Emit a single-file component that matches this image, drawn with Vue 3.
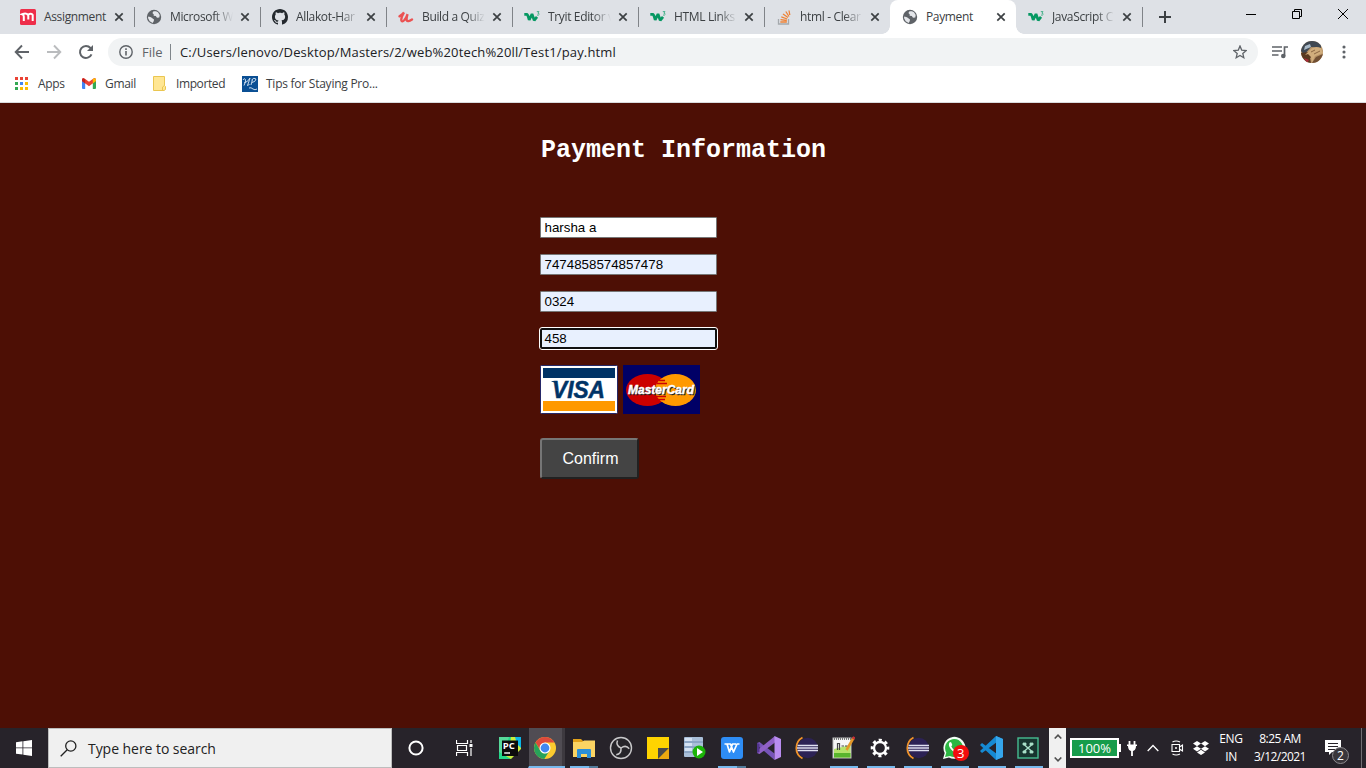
<script setup>
const tabs = [
  { icon: 'mendeley', title: 'Assignment', full: true },
  { icon: 'globe', title: 'Microsoft W' },
  { icon: 'github', title: 'Allakot-Har' },
  { icon: 'udemy', title: 'Build a Quiz' },
  { icon: 'w3', title: 'Tryit Editor v' },
  { icon: 'w3', title: 'HTML Links' },
  { icon: 'stack', title: 'html - Clear' },
  { icon: 'globe', title: 'Payment', active: true, full: true },
  { icon: 'w3', title: 'JavaScript C' }
]

const apps = [
  { icon: 'pycharm' },
  { icon: 'chrome', current: true },
  { icon: 'explorer', open: true, stacked: true },
  { icon: 'obs' },
  { icon: 'sticky' },
  { icon: 'server' },
  { icon: 'wps', open: true, stacked: true },
  { icon: 'vs' },
  { icon: 'eclipse' },
  { icon: 'npp', open: true },
  { icon: 'gear', open: true },
  { icon: 'eclipse', open: true },
  { icon: 'whatsapp', open: true, badge: '3' },
  { icon: 'vscode', open: true },
  { icon: 'xnode', open: true }
]

const fields = [
  { value: 'harsha a' },
  { value: '7474858574857478', filled: true },
  { value: '0324', filled: true },
  { value: '458', filled: true, focus: true }
]
</script>

<template>
  <div class="screen">
    <svg class="defs" width="0" height="0" aria-hidden="true">
      <symbol id="mendeley" viewBox="0 0 16 16">
        <rect width="16" height="16" rx="1.5" fill="#ee2e4a" />
        <path d="M3.800 12V7.500Q3.800 5.600 2.200 5.200Q6.300 3.800 7.900 5.800Q11.500 3.800 12.700 6V12M8.300 10.500V6.500" fill="none" stroke="#fff" stroke-width="2" />
      </symbol>
      <symbol id="globe" viewBox="0 0 16 16">
        <circle cx="8" cy="8" r="7.200" fill="#5f6368" />
        <path d="M2.300 7.500L5 8.200L8 10.600L7.800 12.100L6.700 14L3.700 12.300L2 9Z M7.500 2.300L6.400 4.100L7.800 5.400L7.600 6.800L9.800 7.100L11 8.700L13.300 8.600L13.700 6L12 3.300L10 2.200Z" fill="#e4e6ea" />
      </symbol>
      <symbol id="github" viewBox="0 0 16 16">
        <path fill="#24292e" fill-rule="evenodd" d="M8 0C3.580 0 0 3.580 0 8c0 3.540 2.290 6.530 5.470 7.590.4.070.550-.170.550-.380 0-.190-.010-.820-.010-1.490-2.010.370-2.530-.490-2.690-.940-.090-.230-.480-.940-.820-1.130-.280-.150-.680-.520-.010-.530.630-.010 1.080.580 1.230.820.720 1.210 1.870.870 2.330.660.070-.520.280-.870.510-1.070-1.780-.200-3.640-.890-3.640-3.950 0-.870.310-1.590.820-2.150-.080-.200-.360-1.020.080-2.120 0 0 .670-.210 2.200.820.640-.180 1.320-.270 2-.270s1.360.090 2 .270c1.530-1.040 2.200-.820 2.200-.820.440 1.100.160 1.920.080 2.120.510.560.820 1.270.820 2.150 0 3.070-1.870 3.750-3.650 3.950.290.250.540.730.540 1.480 0 1.070-.010 1.930-.010 2.200 0 .210.150.460.550.380A8 8 0 0 0 16 8c0-4.420-3.580-8-8-8z" />
      </symbol>
      <symbol id="udemy" viewBox="0 0 16 16">
        <path d="M1.500 7.300Q4.500 5.500 6 3.400Q3 8.500 3.300 11.200Q3.800 13.700 6.400 11Q8.400 8.700 9.600 5.200Q8.200 9.500 8.700 11.300Q9.600 13.400 14 10.500" fill="none" stroke="#eb5252" stroke-width="2.300" stroke-linecap="round" />
      </symbol>
      <symbol id="w3" viewBox="0 0 16 16">
        <path d="M.3 5.300H3Q4 6 5.200 11L8 5L10.200 11.300L13 7.800" fill="none" stroke="#059862" stroke-width="2.700" stroke-linejoin="bevel" />
        <path d="M12.800 2.600H15L13.900 4.200Q15.300 4.300 15.100 5.500Q14.600 6.600 13 6" fill="none" stroke="#3aad83" stroke-width=".9" />
      </symbol>
      <symbol id="stack" viewBox="0 0 16 16">
        <path d="M2.500 10V15H12.500V10" fill="none" stroke="#a5a9ad" stroke-width="1.300" />
        <path d="M4.300 13H10.800M4.500 10.600L10.800 11.500M5.300 7.900L11.200 10M7 4.900L12 8.600M9.800 2.500L13 7.500M13 1.500L13.800 6" fill="none" stroke="#ef8236" stroke-width="1.300" />
      </symbol>

      <symbol id="pycharm" viewBox="0 0 24 24">
        <path d="M1 1H16L12 23H1Z" fill="#21d789" /><path d="M1 1H11L4 23H1Z" fill="#57d99a" />
        <path d="M13 1H23V13L13 23H1L11 16Z" fill="#c9ed3c" /><path d="M17 1H23V12L19 8Z" fill="#0bb6e8" />
        <path d="M1 16L13 23H1Z" fill="#21d789" />
        <rect x="4" y="4.500" width="16" height="15.500" fill="#0b0b0b" />
        <text x="4.800" y="13" font-size="9.500" font-weight="700" fill="#fff" letter-spacing="0">PC</text>
        <path d="M6.200 17H12" stroke="#fff" stroke-width="1.400" />
      </symbol>
      <symbol id="chrome" viewBox="0 0 24 24">
        <circle cx="12" cy="12" r="11" fill="#fccb2f" />
        <path d="M2.500 6.500A11 11 0 0 1 21.500 6.500H12L7.500 14.500Z" fill="#dd4a3c" />
        <path d="M2.500 6.500L7.300 14.700Q9 17.500 12 17.500L16.300 15L11.300 23A11 11 0 0 1 2.500 6.500Z" fill="#27a25a" />
        <circle cx="12" cy="12" r="5.500" fill="#fff" /><circle cx="12" cy="12" r="4.400" fill="#4087f0" />
      </symbol>
      <symbol id="explorer" viewBox="0 0 24 24">
        <path d="M1 3H9L11 5H23V21H1Z" fill="#e3a21a" /><path d="M1 6H10L12 4.500H23V21H1Z" fill="#fbd463" />
        <path d="M5 22V14Q5 13 6 13H18Q19 13 19 14V22H15V18H9V22Z" fill="#2b8fd8" />
      </symbol>
      <symbol id="obs" viewBox="0 0 24 24">
        <circle cx="12" cy="12" r="10.500" fill="#26252a" stroke="#c8c8ca" stroke-width="1.400" />
        <g fill="none" stroke="#c8c8ca" stroke-width="1.500">
          <path d="M12 12Q6.500 9.500 8.500 4.500" />
          <path d="M12 12Q6.500 9.500 8.500 4.500" transform="rotate(120 12 12)" />
          <path d="M12 12Q6.500 9.500 8.500 4.500" transform="rotate(240 12 12)" />
        </g>
      </symbol>
      <symbol id="sticky" viewBox="0 0 24 24">
        <path d="M1 1H23V12L12 23H1Z" fill="#ffd400" /><path d="M12 23V12H23Z" fill="#4a4a4a" /><path d="M12 23L23 12V23Z" fill="#eca910" />
      </symbol>
      <symbol id="server" viewBox="0 0 24 24">
        <rect x="1" y="1" width="19" height="20" rx="1" fill="#a9bfd9" />
        <path d="M1 6H20M1 11H20M1 16H20" stroke="#6f8cb0" stroke-width="1" /><path d="M2 2H9V5H2ZM2 7H9V10H2ZM2 12H9V15H2Z" fill="#d3e1f2" />
        <circle cx="16" cy="16" r="6.500" fill="#1bb408" /><path d="M14 12V20L20 16Z" fill="#fff" />
      </symbol>
      <symbol id="wps" viewBox="0 0 24 24">
        <rect x="1" y="1" width="22" height="22" rx="3" fill="#2e8df5" />
        <path d="M4.500 8H10.500L13.500 16L17 8H19.500M7 8L9.500 16L12.500 8H16" fill="none" stroke="#fff" stroke-width="1.700" stroke-linejoin="round" />
      </symbol>
      <symbol id="vs" viewBox="0 0 24 24">
        <path d="M0 7L2.500 6L17.500 17.500V24L0 9Z" fill="#7654b8" />
        <path d="M0 17L2.500 18L18 6.500V0L0 14.500Z" fill="#8f60c6" /><path d="M0 7L2.500 8V16L0 17Z" fill="#52348d" />
        <path d="M17.500 0L24 3V21L17.500 24Z" fill="#b98cf0" />
      </symbol>
      <symbol id="eclipse" viewBox="0 0 24 24">
        <path d="M8.500 1.500A12 12 0 0 0 8.500 22.500" fill="none" stroke="#f0922a" stroke-width="1.800" />
        <circle cx="13.700" cy="12" r="10.200" fill="#2c2255" />
        <path d="M3.500 9.500H24M3 12H24M3.500 14.500H24" stroke="#dfe0f1" stroke-width="1.500" />
      </symbol>
      <symbol id="npp" viewBox="0 0 24 24">
        <rect x="2" y="2" width="18" height="20" fill="#f6f6f6" stroke="#bbb" />
        <path d="M3 13L19.500 9V21.500H3Z" fill="#b3e36a" /><path d="M3 17H19.500V21.500H3Z" fill="#58b52d" />
        <path d="M3 3H20" stroke="#555" stroke-width="1.600" stroke-dasharray="1 1" />
        <path d="M6.500 14V7.500H8.500V14M10.500 10H13M14 10H16.500" fill="none" stroke="#444" stroke-width="1.200" />
        <path d="M22.500 2L15.500 14" stroke="#e39728" stroke-width="2.600" /><path d="M23.300 .800L22 3" stroke="#c72f36" stroke-width="2.600" />
      </symbol>
      <symbol id="gear" viewBox="0 0 24 24">
        <circle cx="12" cy="12" r="6" fill="none" stroke="#fff" stroke-width="2.300" />
        <circle cx="12" cy="12" r="7.800" fill="none" stroke="#fff" stroke-width="3" stroke-dasharray="3.063 3.063" stroke-dashoffset="1.530" />
      </symbol>
      <symbol id="whatsapp" viewBox="0 0 24 24">
        <path d="M1 23L2.700 17A11 11 0 1 1 7 21.400Z" fill="#f2fff5" /><path d="M3 21L4.300 16.500A9 9 0 1 1 8 20Z" fill="#2cb742" />
        <path d="M8 6Q6 8 7.500 11Q10 16 15 17.200Q17.500 16.500 17 14.500L14.500 13L13 14.300Q10.500 13 9.300 10.500L10.300 9L9.300 6.500Z" fill="#fff" />
      </symbol>
      <symbol id="vscode" viewBox="0 0 24 24">
        <path d="M17 0L24 3V21L17 24L1 9L3 7L18 18V6L3 17L1 15Z" fill="#168ad3" /><path d="M17 0L24 3V21L17 24Z" fill="#35a6ec" />
      </symbol>
      <symbol id="xnode" viewBox="0 0 24 24">
        <rect x="2" y="2" width="20" height="20" fill="#17352f" stroke="#46bd91" stroke-width="1.400" />
        <path d="M7.500 8L16.500 16M7.500 16L16.500 8" stroke="#a8e0c8" stroke-width="1.400" />
        <path d="M7 7H10V9H7ZM14 7H17V9H14ZM7 15H10V17H7ZM14 15H17V17H14Z" fill="#a8e0c8" stroke="#a8e0c8" stroke-width=".8" />
      </symbol>
    </svg>

    <header class="tabstrip">
      <div v-for="(t, i) in tabs" :key="i" class="tab" :class="{ active: t.active, nosep: i === 6 }">
        <svg class="favicon"><use :href="'#' + t.icon" /></svg>
        <span class="title" :class="{ fade: !t.full }">{{ t.title }}</span>
        <svg class="close" viewBox="0 0 10 10"><path d="M1.300 1.300L8.700 8.700M8.700 1.300L1.300 8.700" /></svg>
      </div>
      <svg class="plus" viewBox="0 0 12 12"><path d="M6 0V12M0 6H12" /></svg>
      <div class="winctl">
        <svg width="10" height="10"><path d="M0 5.500H10" /></svg>
        <svg width="10" height="10"><path d="M.5 2.500H7.500V9.500H.5ZM2.500 2.500V.5H9.500V7.500H7.500" /></svg>
        <svg width="10" height="10"><path d="M0 0L10 10M10 0L0 10" /></svg>
      </div>
    </header>

    <div class="toolbar">
      <svg class="nav" viewBox="0 0 16 16"><path d="M15 8H2M8 1.500L1.700 8L8 14.500" stroke="#5f6368" stroke-width="1.900" fill="none" /></svg>
      <svg class="nav" viewBox="0 0 16 16"><path d="M1 8H14M8 1.500L14.300 8L8 14.500" stroke="#babcbe" stroke-width="1.900" fill="none" /></svg>
      <svg class="nav" viewBox="0 0 16 16"><path d="M13.500 10.300A6 6 0 1 1 12.500 4L14 5.800" stroke="#5f6368" stroke-width="2" fill="none" /><path d="M15 1V7H9Z" fill="#5f6368" /></svg>
      <div class="omnibox">
        <svg class="info" viewBox="0 0 14 14"><circle cx="7" cy="7" r="6.200" fill="none" stroke="#5f6368" stroke-width="1.400" /><path d="M7 6V10.500M7 3.300V4.900" stroke="#5f6368" stroke-width="1.600" /></svg>
        <span class="scheme">File</span>
        <span class="url">C:/Users/lenovo/Desktop/Masters/2/web%20tech%20ll/Test1/pay.html</span>
        <svg class="star" viewBox="0 0 14 14"><path d="M7 1L8.700 5.100L13.200 5.500L9.800 8.400L10.800 12.700L7 10.400L3.200 12.700L4.200 8.400L.8 5.500L5.300 5.100Z" fill="none" stroke="#5f6368" stroke-width="1.300" /></svg>
      </div>
      <svg class="media" viewBox="0 0 16 14"><path d="M0 2H10M0 6H10M0 10H6.500M12.500 11V2H16" stroke="#5f6368" stroke-width="1.700" fill="none" /><circle cx="11.300" cy="11" r="2.300" fill="#5f6368" /></svg>
      <svg class="avatar" viewBox="0 0 22 22">
        <clipPath id="av"><circle cx="11" cy="11" r="11" /></clipPath>
        <g clip-path="url(#av)">
          <rect width="22" height="22" fill="#b89468" /><path d="M0 0H20V7L10 6L3 14L0 10Z" fill="#3f4852" />
          <path d="M4 5L9 3L10 6L3 9Z" fill="#a9bac8" /><path d="M0 12L7 11L13 14L9 17L10 22H0Z" fill="#59391f" />
          <path d="M9 9Q13 4 20 7L22 12L14 15L11 22L10 16L7 13L4 14Z" fill="#d0ad7c" /><path d="M15 16L22 13V22H11Z" fill="#725034" />
          <path d="M3 17L8 19L6 22Z" fill="#a82b3a" /><path d="M13 13L19 10M10 11L14 9" stroke="#8b6743" />
        </g>
      </svg>
      <svg class="menu" viewBox="0 0 4 14"><g fill="#5f6368"><circle cx="2" cy="2" r="1.550" /><circle cx="2" cy="7" r="1.550" /><circle cx="2" cy="12" r="1.550" /></g></svg>
    </div>

    <nav class="bookmarks">
      <div class="bm apps">
        <svg width="13" height="13" viewBox="0 0 13 13">
          <path d="M0 0H3V3H0ZM5 0H8V3H5ZM10 0H13V3H10Z" fill="#ea4335" /><path d="M0 5H3V8H0ZM0 10H3V13H0Z" fill="#34a853" />
          <path d="M5 5H8V8H5Z" fill="#4285f4" /><path d="M5 10H8V13H5Z" fill="#fbbc04" /><path d="M10 5H13V8H10ZM10 10H13V13H10Z" fill="#fbbc04" />
        </svg>
        <span>Apps</span>
      </div>
      <div class="bm gmail">
        <svg width="14" height="11" viewBox="0 0 14 11">
          <path d="M0 1.500L3.200 4V11H1Q0 11 0 10Z" fill="#4285f4" /><path d="M14 1.500L10.800 4V11H13Q14 11 14 10Z" fill="#34a853" />
          <path d="M0 1.500Q.5-.6 2.500.4L7 3.800L11.500.4Q13.500-.6 14 1.500V3L7 8.300L0 3Z" fill="#ea4335" /><path d="M10.800 1L12 .2Q14 0 14 2V3L10.800 5.500Z" fill="#fbbc04" /><path d="M0 1.800Q0 .5 1.200.2L3.200 1.200V5.500L0 3Z" fill="#c5221f" />
        </svg>
        <span>Gmail</span>
      </div>
      <div class="bm imported">
        <svg width="13" height="15" viewBox="0 0 13 15"><path d="M.5.500H11.500V9.500L12.500 10.500V13.500L11 14.500H.5Z" fill="#ffe693" stroke="#eac651" /><path d="M9.500 14V11L11.500 9.500" fill="none" stroke="#eac651" /></svg>
        <span>Imported</span>
      </div>
      <div class="bm tips">
        <svg width="16" height="16" viewBox="0 0 16 16"><rect width="16" height="16" fill="#0a4f94" /><path d="M1 4Q2 1.500 3.500 3.500Q4 5.500 2 9.500M2 7Q6 6 8 2Q7.500 4 5.500 9.500Q6 10 7.500 8M10.500 3.500L9 9M9.500 4Q12 1 14 3Q13.500 6 10 6.500M7 12Q9 11 11 13Q13 14.500 15 13" fill="none" stroke="#dbe8f4" stroke-width=".9" /></svg>
        <span>Tips for Staying Pro...</span>
      </div>
    </nav>

    <main class="page">
      <form class="payment" @submit.prevent>
        <h1>Payment Information</h1>
        <div v-for="f in fields" :key="f.value" class="field" :class="{ filled: f.filled, focus: f.focus }">{{ f.value }}</div>
        <div class="cards">
          <svg width="78" height="49" viewBox="0 0 78 49">
            <rect x=".5" y=".5" width="77" height="48" rx="1" fill="#fff" stroke="#252767" />
            <rect x="3" y="3" width="72" height="10" fill="#036" /><rect x="3" y="36" width="72" height="10" fill="#f90" />
            <text x="12" y="33" class="visa" textLength="53" lengthAdjust="spacingAndGlyphs">VISA</text>
            <path d="M11.500 16H17V19Q14.500 17 11.500 16.500Z" fill="#036" />
          </svg>
          <svg width="77" height="49" viewBox="0 0 77 49">
            <rect width="77" height="49" fill="#006" />
            <ellipse cx="24.500" cy="25" rx="21.500" ry="16" fill="#c00" /><ellipse cx="52.500" cy="25" rx="20.500" ry="16" fill="#f90" />
            <path d="M36 15.500H42M34 18.500H44M32 31.500H43M34 34.500H42" stroke="#c00" stroke-width="1.500" />
            <text x="6" y="30" class="mc shadow" textLength="66" lengthAdjust="spacingAndGlyphs" aria-hidden="true">MasterCard</text>
            <text x="5" y="29" class="mc" textLength="66" lengthAdjust="spacingAndGlyphs">MasterCard</text>
          </svg>
        </div>
        <button type="submit" class="confirm">Confirm</button>
      </form>
    </main>

    <footer class="taskbar">
      <div class="start">
        <svg width="16" height="16" viewBox="0 0 16 16"><path d="M0 2.200L6.500 1.300V7.500H0ZM7.300 1.200L16 0V7.500H7.300ZM0 8.300H6.500V14.600L0 13.700ZM7.300 8.300H16V16L7.300 14.800Z" fill="#fff" /></svg>
      </div>
      <div class="search">
        <svg width="17" height="17" viewBox="0 0 17 17"><circle cx="10.800" cy="6" r="5.100" /><path d="M7.200 9.700L.7 16.200" /></svg>
        <span>Type here to search</span>
      </div>
      <div class="sys"><svg width="16" height="16" viewBox="0 0 16 16"><circle cx="8" cy="8" r="6.600" fill="none" stroke="#fff" stroke-width="2" /></svg></div>
      <div class="sys view"><svg width="17" height="16" viewBox="0 0 17 16"><path d="M.500 0V3.500H11.500V0M.500 16V12.500H11.500V16M1.500 5.500H10.500V10.500H1.500ZM15 0V3M15 8V16" fill="none" stroke="#fff" stroke-width="1.200" /><rect x="13.500" y="4" width="3" height="3" fill="#fff" /></svg></div>
      <div class="approw">
        <div v-for="(a, i) in apps" :key="i" class="app" :class="{ current: a.current, open: a.open, stacked: a.stacked }">
          <svg class="appicon"><use :href="'#' + a.icon" /></svg>
          <span v-if="a.badge" class="badge">{{ a.badge }}</span>
        </div>
      </div>
      <div class="scroller">
        <svg width="8" height="5" viewBox="0 0 8 5"><path d="M.700 4.500L4 1.200L7.300 4.500" /></svg>
        <svg width="8" height="5" viewBox="0 0 8 5"><path d="M.700.500L4 3.800L7.300.500" /></svg>
      </div>
      <div class="battery">100%</div>
      <svg class="plug" viewBox="0 0 10 16"><path d="M2.500 1V5M7.500 1V5M5 10V16" stroke="#fff" stroke-width="1.800" /><path d="M0 4.500H10V6H9Q9 11 5 11Q1 11 1 6H0Z" fill="#fff" /></svg>
      <svg class="chev" viewBox="0 0 12 8"><path d="M.700 7L6 1.500L11.300 7" fill="none" stroke="#fff" stroke-width="1.300" /></svg>
      <svg class="meet" viewBox="0 0 13 16"><path d="M1 4.500H8.500V11.500H1ZM8.500 7L11.500 5V11L8.500 9M1.500 2Q5 0 9 2M1.500 14Q5 16 9 14" fill="none" stroke="#fff" stroke-width="1.100" /><circle cx="5" cy="8" r="1" fill="#fff" /></svg>
      <svg class="dropbox" viewBox="0 0 16 14"><path d="M4 0L8 2.600L4 5.200L0 2.600ZM12 0L16 2.600L12 5.200L8 2.600ZM4 5.200L8 7.800L4 10.400L0 7.800ZM12 5.200L16 7.800L12 10.400L8 7.800ZM8 8.800L12 11.400L8 14L4 11.400Z" fill="#fff" /></svg>
      <div class="lang"><span>ENG</span><span>IN</span></div>
      <div class="clock"><span>8:25 AM</span><span>3/12/2021</span></div>
      <div class="notif">
        <svg width="16" height="16" viewBox="0 0 16 16"><path d="M0 0H16V12H7L4 15V12H0Z" fill="#fff" /><path d="M3 3.500H13M3 6.500H13M3 9.500H10" stroke="#27232a" /></svg>
        <span class="count">2</span>
      </div>
      <div class="peek"></div>
    </footer>
  </div>
</template>

<style>
body { overflow: hidden; }
</style>

<style scoped>
* { box-sizing: border-box; }
.screen { width: 1366px; height: 768px; display: flex; flex-direction: column; overflow: hidden; font-family: "Open Sans", "Noto Sans", sans-serif; font-size: 12px; color: #3c4043; white-space: nowrap; }
.defs { position: absolute; }
svg { display: block; flex: none; }

.tabstrip { height: 34px; background: #dee1e6; display: flex; padding-left: 8px; }
.tab { width: 126px; height: 34px; padding: 0 0 0 12px; display: flex; align-items: center; position: relative; flex: none; }
.tab::after { content: ""; position: absolute; right: -1px; top: 7px; width: 1px; height: 20px; background: #808388; }
.tab.active::after, .tab.nosep::after { display: none; }
.tab.active { background: #fff; border-radius: 8px 8px 0 0; }
.tab.active::before { content: ""; position: absolute; left: -8px; right: -8px; bottom: 0; height: 8px; background: radial-gradient(circle at 0 0, transparent 7.5px, #fff 8px) left / 8px 8px no-repeat, radial-gradient(circle at 100% 0, transparent 7.5px, #fff 8px) right / 8px 8px no-repeat; }
.favicon { width: 16px; height: 16px; }
.title { width: 63px; margin-left: 8px; letter-spacing: -0.35px; line-height: 18px; }
.title.fade { mask-image: linear-gradient(90deg, #000 70%, transparent 100%); }
.close { width: 10px; height: 10px; margin-left: 7px; }
.close path { stroke: #3c4043; stroke-width: 1.7; }
.plus { width: 12px; height: 12px; margin: 11px 0 0 17px; }
.plus path { stroke: #3c4043; stroke-width: 2; }
.winctl { margin: 9px 18px 0 auto; display: flex; gap: 36px; }
.winctl path { stroke: #000; fill: none; }

.toolbar { height: 36px; background: #fff; display: flex; align-items: center; padding-left: 14px; }
.nav { width: 16px; height: 16px; margin-right: 16px; }
.omnibox { width: 1150px; height: 28px; margin-left: -2px; background: #f1f3f4; border-radius: 14px; display: flex; align-items: center; padding: 0 11px; }
.info { width: 14px; height: 14px; }
.scheme { font-size: 13px; color: #5f6368; margin-left: 9px; width: 29px; height: 16px; line-height: 17px; border-right: 1px solid #80868b; }
.url { font-size: 13px; color: #202124; margin-left: 9px; letter-spacing: 0.155px; }
.star { width: 14px; height: 14px; margin-left: auto; }
.media { width: 16px; height: 14px; margin-left: 14px; }
.avatar { width: 22px; height: 22px; margin-left: 13px; }
.menu { width: 4px; height: 14px; margin-left: 19px; }

.bookmarks { height: 33px; background: #fff; display: flex; padding: 0 0 5px 15px; border-bottom: 1px solid #d8dbde; }
.bm { display: flex; align-items: center; gap: 10px; letter-spacing: -0.3px; }
.apps { width: 67px; }
.gmail { width: 71px; gap: 9px; }
.imported { width: 89px; letter-spacing: -0.4px; }
.tips { gap: 8px; letter-spacing: -0.25px; }

.page { height: 625px; background: #4d0f05; }
.payment { width: 287px; margin-left: 540px; padding-top: 34px; }
h1 { margin: 0 0 52px; padding-left: 1px; height: 28px; font: bold 25px/28px "Courier New", "Liberation Mono", monospace; color: #fff; }
.field { width: 177px; height: 21px; margin-bottom: 16px; padding: 0 3.5px; border: 1px solid #767676; border-radius: 1px; background: #fff; font: 13.333px/19px "Liberation Sans", sans-serif; color: #000; }
.field.filled { background: #e8f0fe; }
.field.focus { border: 2px solid #101010; border-radius: 2px; outline: 1px solid #fff; line-height: 17px; padding: 0 2.5px; }
.cards { display: flex; gap: 5px; }
.visa { font: italic bold 24px "Liberation Sans", sans-serif; fill: #036; stroke: #036; stroke-width: .5; }
.mc { font: italic bold 12px "Liberation Sans", sans-serif; fill: #fff; stroke: #fff; stroke-width: .4; }
.mc.shadow { fill: #222; stroke: #222; }
.confirm { display: block; width: 99px; height: 41px; margin-top: 24px; padding: 0 0 0 2px; border: 2px outset #767676; border-radius: 3px; background: #444; color: #fff; font: 16px "Liberation Sans", sans-serif; text-align: center; }

.taskbar { height: 40px; background: #27232a; display: flex; color: #fff; }
.start { width: 48px; display: flex; align-items: center; justify-content: center; }
.search { width: 344px; background: #f0f0f0; border: 1px solid #bdbdbd; display: flex; align-items: center; padding-left: 11px; gap: 11px; color: #222; font-size: 14px; letter-spacing: -0.05px; }
.search circle, .search path { fill: none; stroke: #222; stroke-width: 1.3; }
.sys { width: 48px; display: flex; align-items: center; justify-content: center; }
.approw { width: 558px; margin-left: 3px; display: flex; }
.app { width: 37.07px; flex: none; position: relative; display: flex; align-items: center; justify-content: center; }
.appicon { width: 24px; height: 24px; }
.app.open::after { content: ""; position: absolute; left: 5px; bottom: 0; width: 28px; height: 2px; background: #76b9ed; }
.app.stacked::after { background: linear-gradient(90deg, #76b9ed 19px, #527b9a 19px); }
.app.current { background: linear-gradient(90deg, #504c53 33px, #3d393f 33px); background-clip: padding-box; border-left: 1px solid #27232a; border-bottom: 2px solid #76b9ed; padding-right: 4px; padding-top: 2px; }
.badge { position: absolute; left: 17px; top: 17px; width: 16px; height: 16px; border-radius: 50%; background: #f20d0d; font-size: 13px; line-height: 16px; text-align: center; }
.scroller { width: 17px; background: #f0f0f0; display: flex; flex-direction: column; justify-content: space-between; align-items: center; padding: 6px 0; }
.scroller path { fill: none; stroke: #505050; stroke-width: 1.6; }
.battery { position: relative; width: 49px; height: 20px; margin: 10px 0 0 4px; border: 2px solid #fff; background: #169c4b; font-size: 13px; line-height: 16px; text-align: center; }
.battery::after { content: ""; position: absolute; left: 47px; top: 4px; width: 2px; height: 8px; background: #fff; }
.plug { width: 10px; height: 16px; margin: 12px 0 0 8px; }
.chev { width: 12px; height: 8px; margin: 16px 0 0 10px; }
.meet { width: 13px; height: 16px; margin: 12px 0 0 12px; }
.dropbox { width: 16px; height: 14px; margin: 13px 0 0 9px; }
.lang, .clock { display: flex; flex-direction: column; align-items: center; line-height: 18px; padding-top: 2px; letter-spacing: -0.35px; }
.lang { width: 28px; margin-left: 8px; }
.clock { width: 58px; margin-left: 6px; letter-spacing: -0.55px; }
.notif { position: relative; margin: 12px 0 0 16px; width: 36px; }
.count { position: absolute; left: 7px; top: 7px; width: 17px; height: 17px; border-radius: 50%; border: 1px solid #8d8b8f; background: #39363b; font-size: 12px; line-height: 15px; text-align: center; }
.peek { width: 1px; background: #716e73; }
</style>
